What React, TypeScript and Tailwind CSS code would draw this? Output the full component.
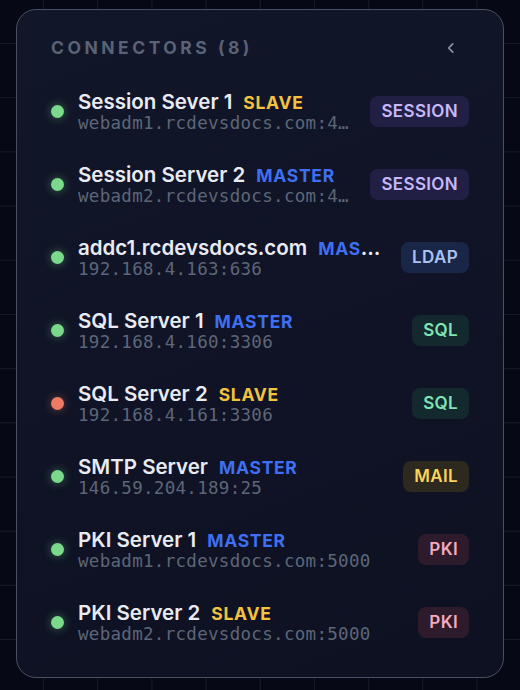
import React from "react";

type Row = {
  name: string;
  role: "MASTER" | "SLAVE";
  host: string;
  badge: "SESSION" | "LDAP" | "SQL" | "MAIL" | "PKI";
  ok: boolean;
};

const rows: Row[] = [
  { name: "Session Sever 1", role: "SLAVE", host: "webadm1.rcdevsdocs.com:443", badge: "SESSION", ok: true },
  { name: "Session Server 2", role: "MASTER", host: "webadm2.rcdevsdocs.com:443", badge: "SESSION", ok: true },
  { name: "addc1.rcdevsdocs.com", role: "MASTER", host: "192.168.4.163:636", badge: "LDAP", ok: true },
  { name: "SQL Server 1", role: "MASTER", host: "192.168.4.160:3306", badge: "SQL", ok: true },
  { name: "SQL Server 2", role: "SLAVE", host: "192.168.4.161:3306", badge: "SQL", ok: false },
  { name: "SMTP Server", role: "MASTER", host: "146.59.204.189:25", badge: "MAIL", ok: true },
  { name: "PKI Server 1", role: "MASTER", host: "webadm1.rcdevsdocs.com:5000", badge: "PKI", ok: true },
  { name: "PKI Server 2", role: "SLAVE", host: "webadm2.rcdevsdocs.com:5000", badge: "PKI", ok: true },
];

const badgeClass: Record<Row["badge"], string> = {
  SESSION: "bg-[#221f45] text-[#c6b8fb]",
  LDAP: "bg-[#1a2648] text-[#a9c3f2]",
  SQL: "bg-[#13292e] text-[#7fe3b4]",
  MAIL: "bg-[#2d291f] text-[#fbd35a]",
  PKI: "bg-[#2d1a2b] text-[#f6a9bd]",
};

export default function App() {
  return (
    <div className="min-h-[690px] w-[520px] bg-[#060915] bg-[linear-gradient(to_right,#151a2a_1px,transparent_1px),linear-gradient(to_bottom,#151a2a_1px,transparent_1px)] bg-[size:54.2px_54.2px] bg-[position:43px_43px] pt-[9px] pl-[16px] font-['Inter',sans-serif]">
      <div className="w-[488px] rounded-[20px] border-[1.5px] border-[#4a5063] bg-[linear-gradient(160deg,#121629,#0d1122)] px-[34px] pt-[28px] pb-[18px]">
        <div className="flex h-[20px] items-center justify-between">
          <span className="text-[17.5px] font-bold uppercase tracking-[0.2em] text-[#596276]">
            Connectors (8)
          </span>
          <svg width="14" height="14" viewBox="0 0 24 24" className="mr-[11px]" fill="none" stroke="#8a93a6" strokeWidth="3" strokeLinecap="round" strokeLinejoin="round">
            <path d="M15 5l-7 7 7 7" />
          </svg>
        </div>
        <div className="mt-[17px] flex flex-col">
          {rows.map((r, i) => (
            <div key={i} className="flex h-[73px] items-center gap-[16px]">
              <div className="flex min-w-0 flex-1 items-center gap-[14px]">
                <span
                  className={
                    r.ok
                      ? "h-[13px] w-[13px] shrink-0 rounded-full bg-[#7ad98a] shadow-[0_0_10px_rgba(122,217,138,0.45)]"
                      : "h-[13px] w-[13px] shrink-0 rounded-full bg-[#ee7a64] shadow-[0_0_10px_rgba(238,122,100,0.45)]"
                  }
                />
                <div className="min-w-0 flex-1">
                  <div className="truncate text-[20.5px] leading-[23px] font-semibold text-[#e9ebf2]">
                    {r.name}
                    <span
                      className={
                        r.role === "MASTER"
                          ? "ml-[11px] text-[17.5px] font-bold tracking-[0.04em] text-[#3f6ff2]"
                          : "ml-[11px] text-[17.5px] font-bold tracking-[0.04em] text-[#f3c23f]"
                      }
                    >
                      {r.role}
                    </span>
                  </div>
                  <div className="truncate font-['DejaVu_Sans_Mono',monospace] text-[17.5px] leading-[19px] tracking-[0.3px] text-[#5d6678]">
                    {r.host}
                  </div>
                </div>
              </div>
              <span
                className={
                  "shrink-0 rounded-[8px] px-[11px] py-[4px] text-[17px] leading-[23px] font-semibold tracking-[0.02em] " +
                  badgeClass[r.badge]
                }
              >
                {r.badge}
              </span>
            </div>
          ))}
        </div>
      </div>
    </div>
  );
}
